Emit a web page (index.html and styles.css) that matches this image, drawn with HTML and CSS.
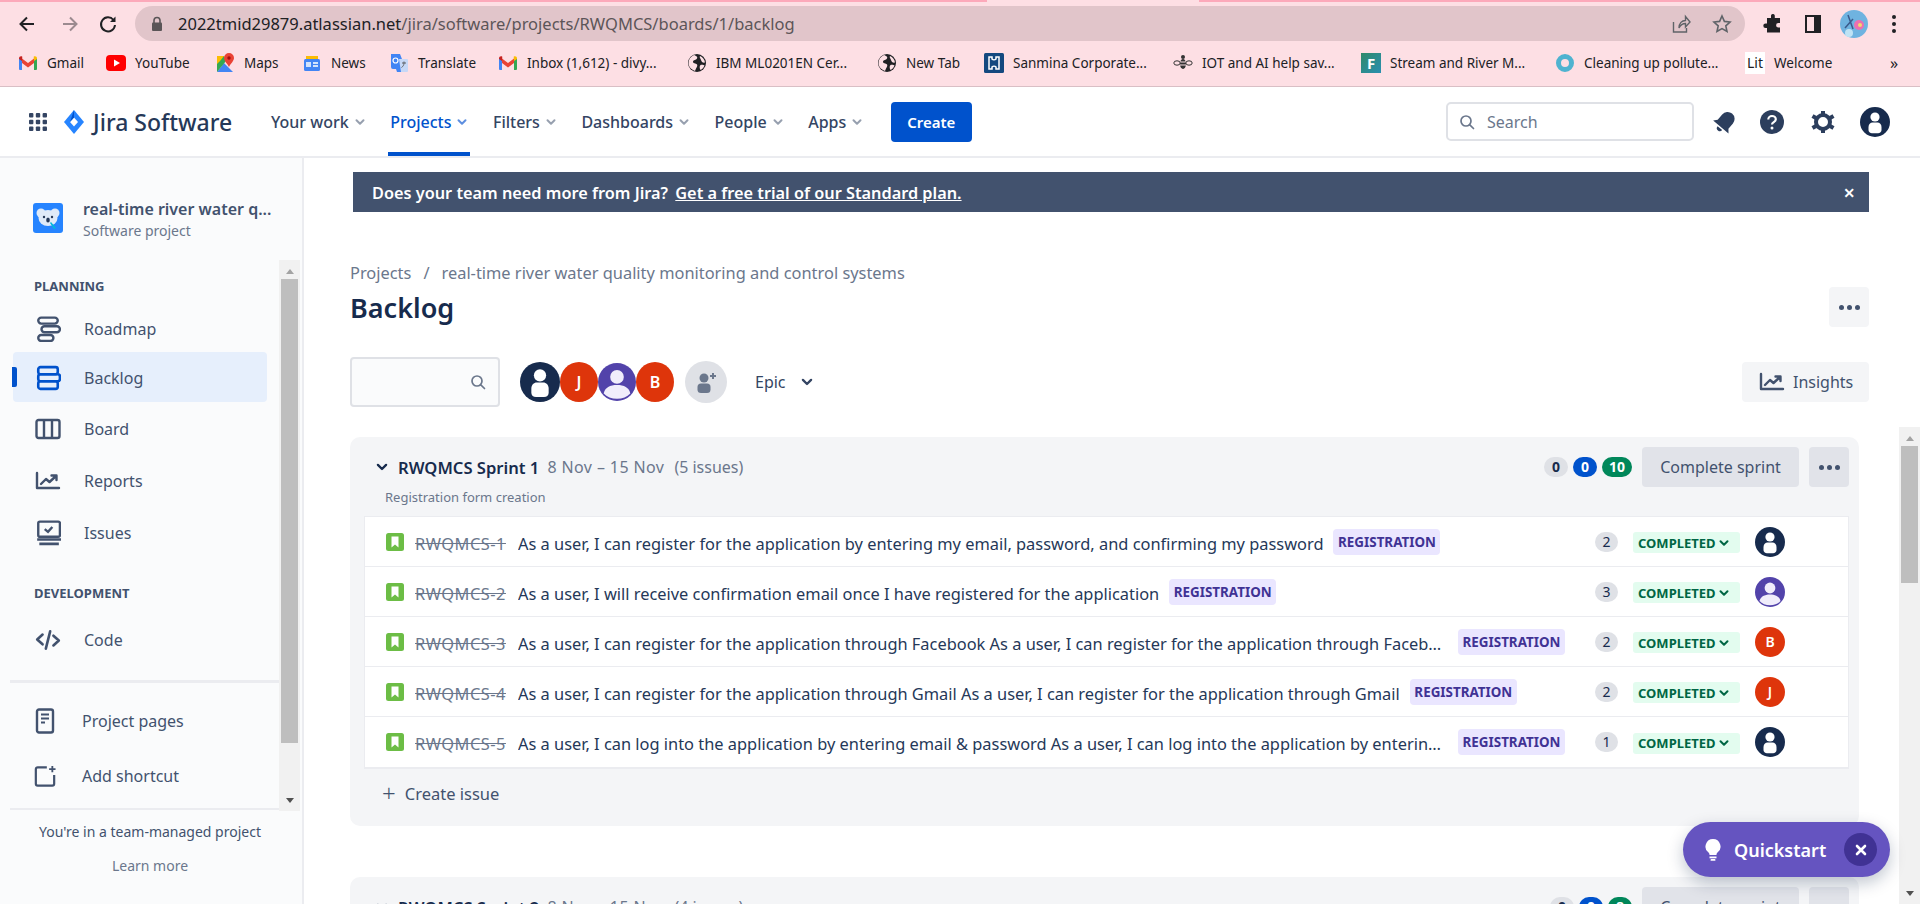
FILE: index.html
```html
<!DOCTYPE html>
<html lang="en">
<head>
    <meta charset="UTF-8">
    <title>Backlog - Jira Software</title>
    <link rel="stylesheet" href="styles.css">
</head>
<body>
    <svg class="defs" xmlns="http://www.w3.org/2000/svg">
        <symbol id="av-user" viewBox="0 0 30 30">
            <circle cx="15" cy="15" r="15" fill="#172b4d"/>
            <circle cx="15" cy="10" r="4.6" fill="#fff"/>
            <path d="M8.5 20c0-3 2-4.6 4-4.6h5c2 0 4 1.6 4 4.6v3c0 2-1.5 3.2-3.5 3.2h-6c-2 0-3.5-1.2-3.5-3.2z" fill="#fff"/>
        </symbol>
        <symbol id="av-purple" viewBox="0 0 30 30">
            <circle cx="15" cy="15" r="15" fill="#5243aa"/>
            <circle cx="15" cy="11" r="5.4" fill="#f0edfb"/>
            <path d="M4.5 24c1-4.6 5-6.6 10.5-6.6s9.500 2 10.500 6.6c-2.500 2.800-6.200 4.300-10.500 4.300s-8-1.500-10.500-4.300z" fill="#f0edfb"/>
        </symbol>
        <symbol id="ic-chev" viewBox="0 0 12 12">
            <path d="M2.5 4.2 6 7.7l3.500-3.500" fill="none" stroke="currentColor" stroke-width="2" stroke-linecap="round" stroke-linejoin="round"/>
        </symbol>
        <symbol id="ic-story" viewBox="0 0 18 18">
            <rect width="18" height="18" rx="2.5" fill="#6cbd45"/>
            <path d="M5.5 3.600h7v10.800L9 11.400l-3.500 3z" fill="#fff"/>
        </symbol>
        <symbol id="ic-globe" viewBox="0 0 20 20">
            <circle cx="10" cy="10" r="9" fill="#202124"/>
            <path d="M7 2c2 1 4 1.500 3 3.500S6.500 6.500 6 8.500s3 1.500 4 3-1 3.500-2 6.500C4 16.500 1.500 13.500 1.500 10 1.500 6.500 3.500 3.500 7 2zM13 3c2.500 1 4.500 3.500 5 6.500-2 .5-3.500-.5-4-2.500s-2-2.500-1-4zM13.500 12c1.500-.5 3.500 0 4 .5-.8 2-2.200 3.500-4 4.500-1-1.500-1.200-4 0-5z" fill="#fde0e5"/>
        </symbol>
        <symbol id="ic-gmail" viewBox="0 0 20 16">
            <path d="M1 15V3l3 2v10H2a1 1 0 0 1-1-1z" fill="#4285f4"/>
            <path d="M19 15V3l-3 2v10h2a1 1 0 0 0 1-1z" fill="#34a853"/>
            <path d="M4 8V3.500L10 8l6-4.500V8l-6 4.500z" fill="#ea4335"/>
            <path d="M1 3.500C1 1.500 3 .8 4.300 1.800L4 6 1 4z" fill="#c5221f"/>
            <path d="M19 3.500c0-2-2-2.700-3.300-1.700L16 6l3-2z" fill="#fbbc04"/>
        </symbol>
        <symbol id="ic-trend" viewBox="0 0 26 20">
            <path d="M2 2v15h22" fill="none" stroke="currentColor" stroke-width="2.400" stroke-linecap="round" stroke-linejoin="round"/>
            <path d="m6 13 5-5 3.500 3L21 5m-4.500-.5H21.500V9" fill="none" stroke="currentColor" stroke-width="2.400" stroke-linecap="round" stroke-linejoin="round"/>
        </symbol>
        <symbol id="ic-search" viewBox="0 0 16 16">
            <circle cx="7" cy="7" r="5" fill="none" stroke="currentColor" stroke-width="1.700"/>
            <path d="m10.800 10.800 3.700 3.700" stroke="currentColor" stroke-width="1.700" stroke-linecap="round"/>
        </symbol>
    </svg>

    <!-- browser chrome -->
    <header class="browser">
        <div class="tab-strip"><span class="tab-gap"></span></div>
        <div class="toolbar">
            <svg class="tool tool-back" viewBox="0 0 20 20"><path d="M17 10H4m6-6.500L3.500 10l6.500 6.500" fill="none" stroke="currentColor" stroke-width="2"/></svg>
            <svg class="tool tool-fwd" viewBox="0 0 20 20"><path d="M3 10h13M10 3.500l6.500 6.500-6.500 6.500" fill="none" stroke="currentColor" stroke-width="2"/></svg>
            <svg class="tool tool-reload" viewBox="0 0 20 20"><path d="M15.500 6A7 7 0 1 0 17 11" fill="none" stroke="currentColor" stroke-width="2"/><path d="M17.500 2.500V8H12z" fill="currentColor"/></svg>
            <div class="omnibox">
                <svg class="lock" viewBox="0 0 12 16"><path d="M3 7V4.500a3 3 0 0 1 6 0V7" fill="none" stroke="#5a5557" stroke-width="1.600"/><rect x="1" y="6.500" width="10" height="8.500" rx="1" fill="#5a5557"/></svg>
                <span class="url"><b>2022tmid29879.atlassian.net</b>/jira/software/projects/RWQMCS/boards/1/backlog</span>
                <svg class="omni-icon" viewBox="0 0 20 20"><path d="M2.500 8v10h13v-4M8 14c0-5 3-7.500 6.500-7.500V2.500L19 8l-4.500 5V9.500C11.500 9.500 9.500 11 8 14z" fill="none" stroke="#5f6368" stroke-width="1.400"/></svg>
                <svg class="omni-icon omni-star" viewBox="0 0 20 20"><path d="m10 2 2.400 5.400 5.600.6-4.200 3.800 1.200 5.700L10 14.600l-5 2.900 1.200-5.700L2 8l5.600-.6z" fill="none" stroke="#5f6368" stroke-width="1.600"/></svg>
            </div>
            <svg class="ext ext-puzzle" viewBox="0 0 20 20"><path d="M8 1.500a2 2 0 0 1 3.800 0V4H17v5h-1.700a2.200 2.200 0 0 0 0 4.400H17V18.500H4V14H2.600a2.300 2.300 0 0 1 0-4.600H4V4h4z" fill="#202124"/></svg>
            <svg class="ext ext-panel" viewBox="0 0 18 20"><path d="M1 1h16v18H1zM3 3v14h7V3z" fill="#202124" fill-rule="evenodd"/></svg>
            <svg class="profile" viewBox="0 0 28 28">
                <circle cx="14" cy="14" r="14" fill="#6fb3e0"/>
                <circle cx="19" cy="15" r="5" fill="#ec6fb0"/>
                <circle cx="20" cy="15" r="2" fill="#f5d76e"/>
                <path d="M8 5l5 14M5 18l8-9" stroke="#3a5a8c" stroke-width="1.500"/>
                <circle cx="9" cy="23" r="4" fill="#bfe3f5"/>
            </svg>
            <span class="kebab"><i></i><i></i><i></i></span>
        </div>
        <nav class="bookmarks">
            <a class="bm bm-gmail"><svg class="bm-icon"><use href="#ic-gmail"/></svg>Gmail</a>
            <a class="bm bm-yt"><svg class="bm-icon" viewBox="0 0 20 20"><rect y="2" width="20" height="16" rx="4" fill="#f00"/><path d="M8 6.500v7l6-3.500z" fill="#fff"/></svg>YouTube</a>
            <a class="bm bm-maps"><svg class="bm-icon" viewBox="0 0 20 20"><path d="M2 19 9 10l9 9z" fill="#4285f4"/><path d="M2 3h7l2 5-9 11z" fill="#34a853"/><path d="M2 3h7L5 8 2 11z" fill="#fbbc04"/><path d="M14 0a5 5 0 0 1 5 5c0 3-3 5-5 9-2-4-5-6-5-9a5 5 0 0 1 5-5z" fill="#ea4335"/><circle cx="14" cy="5" r="1.700" fill="#a50e0e"/></svg>Maps</a>
            <a class="bm bm-news"><svg class="bm-icon" viewBox="0 0 20 20"><path d="M4 3h12v5H4z" fill="#fbbc04"/><rect x="2" y="6" width="16" height="12" rx="1.500" fill="#4285f4"/><rect x="4" y="9" width="5" height="5" fill="#d2e3fc"/><rect x="11" y="9" width="5" height="2" fill="#d2e3fc"/><rect x="11" y="12" width="5" height="2" fill="#d2e3fc"/></svg>News</a>
            <a class="bm bm-trans"><svg class="bm-icon" viewBox="0 0 20 20"><path d="M2 1h9l7 18H8l-1-3H4a2 2 0 0 1-2-2z" fill="#4285f4"/><path d="M10 6h8a1 1 0 0 1 1 1v11a1 1 0 0 1-1 1h-6z" fill="#c6d8f7"/><path d="M13 10h4m-2-1.500v1.500c0 2-1 3.500-2.500 4.500" stroke="#5f6368" stroke-width="1" fill="none"/><circle cx="6.500" cy="7.500" r="2.500" fill="none" stroke="#fff" stroke-width="1.200"/></svg>Translate</a>
            <a class="bm bm-inbox"><svg class="bm-icon"><use href="#ic-gmail"/></svg>Inbox (1,612) - divy...</a>
            <a class="bm bm-ibm"><svg class="bm-icon"><use href="#ic-globe"/></svg>IBM ML0201EN Cer...</a>
            <a class="bm bm-new"><svg class="bm-icon"><use href="#ic-globe"/></svg>New Tab</a>
            <a class="bm bm-san"><svg class="bm-icon" viewBox="0 0 20 20"><rect width="20" height="20" rx="1.500" fill="#14497f"/><path d="M5 4h3v2c1 1 3 1 4 0V4h3v12h-3v-2c-1-1-3-1-4 0v2H5z" fill="none" stroke="#fff" stroke-width="1.500"/></svg>Sanmina Corporate...</a>
            <a class="bm bm-iot"><svg class="bm-icon" viewBox="0 0 20 20"><ellipse cx="10" cy="11" rx="3" ry="5" fill="#333"/><path d="M7 9h6M7 12h6" stroke="#fde0e5"/><circle cx="10" cy="4" r="2" fill="#333"/><ellipse cx="4" cy="10" rx="3.200" ry="2.200" fill="none" stroke="#333"/><ellipse cx="16" cy="10" rx="3.200" ry="2.200" fill="none" stroke="#333"/></svg>IOT and AI help sav...</a>
            <a class="bm bm-f"><span class="bm-f-icon">F</span>Stream and River M...</a>
            <a class="bm bm-clean"><svg class="bm-icon" viewBox="0 0 20 20"><circle cx="10" cy="10" r="6.500" fill="none" stroke="#4fb3d0" stroke-width="5"/></svg>Cleaning up pollute...</a>
            <a class="bm bm-lit"><span class="bm-lit-icon">Lit</span>Welcome</a>
            <span class="bm-more">»</span>
        </nav>
    </header>

    <!-- jira top nav -->
    <header class="topnav">
        <svg class="waffle" viewBox="0 0 20 20"><g fill="#344563"><rect x="1" y="1" width="4.400" height="4.400" rx="1"/><rect x="7.800" y="1" width="4.400" height="4.400" rx="1"/><rect x="14.600" y="1" width="4.400" height="4.400" rx="1"/><rect x="1" y="7.800" width="4.400" height="4.400" rx="1"/><rect x="7.800" y="7.800" width="4.400" height="4.400" rx="1"/><rect x="14.600" y="7.800" width="4.400" height="4.400" rx="1"/><rect x="1" y="14.600" width="4.400" height="4.400" rx="1"/><rect x="7.800" y="14.600" width="4.400" height="4.400" rx="1"/><rect x="14.600" y="14.600" width="4.400" height="4.400" rx="1"/></g></svg>
        <svg class="jira-mark" viewBox="0 0 20 24"><path d="M10 0 20 12 10 24 0 12z" fill="#2684ff"/><path d="M10 7.500 14 12l-4 4.500L6 12z" fill="#fff"/><path d="M10 0 6 12l4-4.500z" fill="#0052cc"/></svg>
        <span class="jira-name">Jira Software</span>
        <nav class="menu">
            <a class="menu-item">Your work<svg class="chev"><use href="#ic-chev"/></svg></a>
            <a class="menu-item is-current">Projects<svg class="chev"><use href="#ic-chev"/></svg></a>
            <a class="menu-item">Filters<svg class="chev"><use href="#ic-chev"/></svg></a>
            <a class="menu-item">Dashboards<svg class="chev"><use href="#ic-chev"/></svg></a>
            <a class="menu-item">People<svg class="chev"><use href="#ic-chev"/></svg></a>
            <a class="menu-item">Apps<svg class="chev"><use href="#ic-chev"/></svg></a>
        </nav>
        <button class="create">Create</button>
        <div class="global-search">
            <svg class="search-icon"><use href="#ic-search"/></svg>
            <span>Search</span>
        </div>
        <svg class="nav-icon nav-bell" viewBox="0 0 24 24"><g transform="rotate(40 12 12)" fill="#2c3e5d"><path d="M12 1a7 7 0 0 0-7 7v7l-3 3.500h20L19 15V8a7 7 0 0 0-7-7z"/><path d="M9 20h6a3 3 0 0 1-6 0z"/></g></svg>
        <svg class="nav-icon nav-help" viewBox="0 0 24 24"><circle cx="12" cy="12" r="12" fill="#2c3e5d"/><path d="M8.300 9.500C8.300 7.500 10 6 12 6s3.800 1.300 3.800 3.300c0 2.800-3.800 2.800-3.800 5.200" fill="none" stroke="#fff" stroke-width="2.200"/><circle cx="12" cy="18" r="1.500" fill="#fff"/></svg>
        <svg class="nav-icon nav-gear" viewBox="0 0 24 24"><circle cx="12" cy="12" r="7" fill="none" stroke="#2c3e5d" stroke-width="4"/><g stroke="#2c3e5d" stroke-width="4"><path d="M12 1v4M12 19v4M1.500 6l3.500 2M19 16l3.500 2M1.500 18 5 16M19 8l3.500-2"/></g></svg>
        <svg class="nav-avatar"><use href="#av-user"/></svg>
    </header>

    <div class="workspace">
        <aside class="sidebar">
            <div class="project">
                <svg class="project-icon" viewBox="0 0 30 30">
                    <rect width="30" height="30" rx="3" fill="#2684ff"/>
                    <circle cx="8" cy="10" r="4.500" fill="#dfeaf8"/>
                    <circle cx="22" cy="10" r="4.500" fill="#dfeaf8"/>
                    <ellipse cx="15" cy="15" rx="9.500" ry="8" fill="#dfeaf8"/>
                    <circle cx="11" cy="14" r="1.200" fill="#253858"/>
                    <circle cx="19" cy="14" r="1.200" fill="#253858"/>
                    <ellipse cx="15" cy="17" rx="1.800" ry="2.600" fill="#253858"/>
                    <path d="m18 19 5 6-2 1-4-6z" fill="#00b8d9"/>
                </svg>
                <div class="project-text">
                    <div class="project-name">real-time river water q...</div>
                    <div class="project-type">Software project</div>
                </div>
            </div>
            <div class="side-scroll">
                <div class="side-list">
                    <div class="side-label">PLANNING</div>
                    <a class="side-item side-roadmap">
                        <svg class="side-icon" viewBox="0 0 24 24"><g fill="none" stroke="#42526e" stroke-width="2.200"><rect x="3" y="1.500" width="18" height="5.500" rx="2.750"/><rect x="6" y="9.500" width="17" height="5.500" rx="2.750"/><rect x="3" y="17.500" width="14" height="5.500" rx="2.750"/></g></svg>
                        Roadmap
                    </a>
                    <a class="side-item is-active">
                        <svg class="side-icon" viewBox="0 0 24 24"><g fill="none" stroke="#0052cc" stroke-width="2.400"><rect x="3" y="2" width="18" height="6.500" rx="2"/><rect x="3" y="8.500" width="20" height="6.500" rx="2"/><rect x="3" y="15" width="18" height="7" rx="2"/></g></svg>
                        Backlog
                    </a>
                    <a class="side-item">
                        <svg class="side-icon" viewBox="0 0 26 24"><g fill="none" stroke="#42526e" stroke-width="2.400"><rect x="1.500" y="3" width="23" height="18" rx="2"/><path d="M9 3v18M17 3v18"/></g></svg>
                        Board
                    </a>
                    <a class="side-item">
                        <svg class="side-icon side-trend"><use href="#ic-trend"/></svg>
                        Reports
                    </a>
                    <a class="side-item">
                        <svg class="side-icon" viewBox="0 0 24 24"><g fill="none" stroke="#42526e" stroke-width="2.200"><rect x="3" y="1.500" width="20" height="14" rx="1.500"/><path d="m9 8.500 3 2.500 4-4.500"/></g><path d="M2 18h22M4 22h18" stroke="#42526e" stroke-width="2.400"/></svg>
                        Issues
                    </a>
                    <div class="side-label side-label-dev">DEVELOPMENT</div>
                    <a class="side-item side-code">
                        <svg class="side-icon" viewBox="0 0 24 24"><path d="M7 7 2 11.500 7 16M17 8l5 4.500-5 4.500M14 4 10 20" fill="none" stroke="#42526e" stroke-width="2.400" stroke-linecap="round" stroke-linejoin="round"/></svg>
                        Code
                    </a>
                    <div class="side-links">
                        <a class="side-link">
                            <svg class="link-icon" viewBox="0 0 20 26"><rect x="2" y="1.500" width="16" height="23" rx="2" fill="none" stroke="#42526e" stroke-width="2.400"/><path d="M6 6.500h8M6 10.500h8M6 14.500h4" stroke="#42526e" stroke-width="2"/></svg>
                            Project pages
                        </a>
                        <a class="side-link">
                            <svg class="link-icon" viewBox="0 0 24 24"><path d="M14 2.500H4a2 2 0 0 0-2 2v16a2 2 0 0 0 2 2h16a2 2 0 0 0 2-2V11" fill="none" stroke="#42526e" stroke-width="2.400"/><path d="M20 1v7M16.500 4.500h7" stroke="#42526e" stroke-width="2"/></svg>
                            Add shortcut
                        </a>
                    </div>
                </div>
                <div class="scrollbar scrollbar-side">
                    <span class="arrow-up"></span>
                    <span class="thumb"></span>
                    <span class="arrow-down"></span>
                </div>
            </div>
            <div class="side-foot">
                <p>You're in a team-managed project</p>
                <p class="learn">Learn more</p>
            </div>
        </aside>

        <main class="content">
            <div class="banner">
                <span class="banner-text">Does your team need more from Jira? <a>Get a free trial of our Standard plan.</a></span>
                <span class="banner-close">×</span>
            </div>
            <div class="crumbs">Projects<span class="crumb-sep">/</span>real-time river water quality monitoring and control systems</div>
            <div class="title-row">
                <h1>Backlog</h1>
                <button class="square-btn page-more"><i></i><i></i><i></i></button>
            </div>
            <div class="filters">
                <div class="filter-search"><svg class="search-icon"><use href="#ic-search"/></svg></div>
                <div class="avatars">
                    <svg class="face face-1"><use href="#av-user"/></svg>
                    <span class="face letter">J</span>
                    <svg class="face"><use href="#av-purple"/></svg>
                    <span class="face letter">B</span>
                </div>
                <span class="add-person">
                    <svg viewBox="0 0 24 24" class="add-person-icon"><circle cx="10" cy="8" r="4.500" fill="#6b778c"/><rect x="3.500" y="13.500" width="13" height="9.500" rx="3.500" fill="#6b778c"/><path d="M19 3v6M16 6h6" stroke="#6b778c" stroke-width="2"/></svg>
                </span>
                <span class="epic">Epic<svg class="epic-chev"><use href="#ic-chev"/></svg></span>
                <button class="insights"><svg class="insights-icon"><use href="#ic-trend"/></svg>Insights</button>
            </div>

            <section class="sprint">
                <div class="sprint-head">
                    <svg class="sprint-chev"><use href="#ic-chev"/></svg>
                    <span class="sprint-name">RWQMCS Sprint 1</span>
                    <span class="sprint-meta">8 Nov – 15 Nov</span>
                    <span class="sprint-meta sprint-count">(5 issues)</span>
                    <div class="sprint-actions">
                        <span class="count">0</span>
                        <span class="count count-blue">0</span>
                        <span class="count count-green">10</span>
                        <button class="complete">Complete sprint</button>
                        <button class="square-btn"><i></i><i></i><i></i></button>
                    </div>
                </div>
                <div class="sprint-goal">Registration form creation</div>
                <ul class="issues">
                    <li class="issue">
                        <svg class="story"><use href="#ic-story"/></svg>
                        <span class="key">RWQMCS-1</span>
                        <span class="summary">As a user, I can register for the application by entering my email, password, and confirming my password</span>
                        <span class="tag">REGISTRATION</span>
                        <span class="points">2</span>
                        <span class="status">COMPLETED<svg class="status-chev"><use href="#ic-chev"/></svg></span>
                        <svg class="assignee"><use href="#av-user"/></svg>
                    </li>
                    <li class="issue">
                        <svg class="story"><use href="#ic-story"/></svg>
                        <span class="key">RWQMCS-2</span>
                        <span class="summary">As a user, I will receive confirmation email once I have registered for the application</span>
                        <span class="tag">REGISTRATION</span>
                        <span class="points">3</span>
                        <span class="status">COMPLETED<svg class="status-chev"><use href="#ic-chev"/></svg></span>
                        <svg class="assignee"><use href="#av-purple"/></svg>
                    </li>
                    <li class="issue">
                        <svg class="story"><use href="#ic-story"/></svg>
                        <span class="key">RWQMCS-3</span>
                        <span class="summary">As a user, I can register for the application through Facebook As a user, I can register for the application through Facebook</span>
                        <span class="tag">REGISTRATION</span>
                        <span class="points">2</span>
                        <span class="status">COMPLETED<svg class="status-chev"><use href="#ic-chev"/></svg></span>
                        <span class="assignee letter">B</span>
                    </li>
                    <li class="issue">
                        <svg class="story"><use href="#ic-story"/></svg>
                        <span class="key">RWQMCS-4</span>
                        <span class="summary">As a user, I can register for the application through Gmail As a user, I can register for the application through Gmail</span>
                        <span class="tag">REGISTRATION</span>
                        <span class="points">2</span>
                        <span class="status">COMPLETED<svg class="status-chev"><use href="#ic-chev"/></svg></span>
                        <span class="assignee letter">J</span>
                    </li>
                    <li class="issue">
                        <svg class="story"><use href="#ic-story"/></svg>
                        <span class="key">RWQMCS-5</span>
                        <span class="summary">As a user, I can log into the application by entering email &amp; password As a user, I can log into the application by entering email &amp; password</span>
                        <span class="tag">REGISTRATION</span>
                        <span class="points">1</span>
                        <span class="status">COMPLETED<svg class="status-chev"><use href="#ic-chev"/></svg></span>
                        <svg class="assignee"><use href="#av-user"/></svg>
                    </li>
                </ul>
                <div class="create-issue"><span class="plus">+</span>Create issue</div>
            </section>

            <section class="sprint sprint-next">
                <div class="sprint-head">
                    <svg class="sprint-chev"><use href="#ic-chev"/></svg>
                    <span class="sprint-name">RWQMCS Sprint 2</span>
                    <span class="sprint-meta">8 Nov – 15 Nov</span>
                    <span class="sprint-meta sprint-count">(4 issues)</span>
                    <div class="sprint-actions">
                        <span class="count">0</span>
                        <span class="count count-blue">0</span>
                        <span class="count count-green">8</span>
                        <button class="complete">Complete sprint</button>
                        <button class="square-btn"><i></i><i></i><i></i></button>
                    </div>
                </div>
            </section>
        </main>

        <div class="scrollbar scrollbar-page">
            <span class="arrow-up"></span>
            <span class="thumb"></span>
            <span class="arrow-down"></span>
        </div>

        <div class="quickstart">
            <svg class="bulb" viewBox="0 0 16 22"><path d="M8 0a7.500 7.500 0 0 0-4.500 13.500c.8.700 1 1.500 1 2.500h7c0-1 .2-1.800 1-2.500A7.500 7.500 0 0 0 8 0z" fill="#fff"/><rect x="4.500" y="17.500" width="7" height="1.800" fill="#fff"/><rect x="5.500" y="20" width="5" height="1.800" rx=".9" fill="#fff"/></svg>
            <span>Quickstart</span>
            <span class="qs-close">
                <svg viewBox="0 0 12 12" class="qs-x"><path d="M2 2l8 8M10 2l-8 8" stroke="#fff" stroke-width="2.600" stroke-linecap="round"/></svg>
            </span>
        </div>
    </div>
</body>
</html>
```

FILE: styles.css
```css
/* Jira backlog inside a pink browser theme */
:root {
    --ui: "Noto Sans", "Open Sans", sans-serif;
    --ink: #172b4d;
    --ink-2: #42526e;
    --ink-3: #6b778c;
    --chrome: #fddfe4;
    --grey-btn: #f4f5f7;
    --grey-active: #e1e3e9;
}

html, body {
    margin: 0;
    height: 100%;
}

body {
    display: flex;
    flex-direction: column;
    height: 904px;
    overflow: hidden;
    background: #fff;
    color: var(--ink);
    font-family: var(--ui);
}

.defs {
    display: none;
}

button {
    font-family: inherit;
    border: 0;
    cursor: pointer;
}

/* browser chrome */
.browser {
    height: 87px;
    flex: none;
    background: var(--chrome);
    border-bottom: 1px solid #d9bfc5;
    box-sizing: border-box;
}

.tab-strip {
    height: 2px;
    background: #fca9ba;
    display: flex;
    padding-left: 987px;
}

.tab-gap {
    width: 212px;
    background: var(--chrome);
}

.toolbar {
    display: flex;
    align-items: center;
    height: 35px;
    margin-top: 4px;
}

.tool {
    width: 20px;
    height: 20px;
    flex: none;
    color: #202124;
}

.tool-back { margin-left: 17px; }
.tool-fwd { margin-left: 23px; color: #9b8a8f; }
.tool-reload { margin-left: 18px; }

.omnibox {
    width: 1610px;
    height: 35px;
    margin-left: 17px;
    flex: none;
    display: flex;
    align-items: center;
    border-radius: 18px;
    background: #e1c5ca;
}

.lock {
    width: 12px;
    height: 16px;
    margin-left: 16px;
}

.url {
    margin-left: 15px;
    font-size: 16.5px;
    color: #5c5558;
    white-space: nowrap;
}

.url b {
    font-weight: 400;
    color: #202124;
}

.omni-icon {
    width: 20px;
    height: 20px;
    margin-left: auto;
    margin-right: 0;
}

.omni-star {
    margin-left: 21px;
    margin-right: 13px;
}

.ext {
    height: 20px;
    flex: none;
}

.ext-puzzle { width: 20px; margin-left: 18px; }
.ext-panel { width: 18px; margin-left: 21px; }

.profile {
    width: 28px;
    height: 28px;
    margin-left: 18px;
    flex: none;
}

.kebab {
    display: flex;
    flex-direction: column;
    gap: 3px;
    margin-left: 24px;
}

.kebab i {
    width: 4px;
    height: 4px;
    border-radius: 50%;
    background: #202124;
}

.bookmarks {
    display: flex;
    align-items: center;
    height: 36px;
    margin-top: 4px;
    padding-left: 18px;
    font-size: 13.5px;
    color: #202124;
    white-space: nowrap;
}

.bm {
    display: flex;
    align-items: center;
    gap: 9px;
    flex: none;
}

.bm-icon {
    width: 20px;
    height: 20px;
    flex: none;
}

.bm-gmail { width: 88px; }
.bm-yt { width: 109px; }
.bm-maps { width: 87px; }
.bm-news { width: 87px; }
.bm-trans { width: 109px; }
.bm-inbox { width: 189px; }
.bm-ibm { width: 190px; }
.bm-new { width: 107px; }
.bm-san { width: 189px; }
.bm-iot { width: 188px; }
.bm-f { width: 194px; }
.bm-clean { width: 190px; }
.bm-lit { width: 145px; }

.bm-f-icon {
    width: 20px;
    height: 20px;
    flex: none;
    background: linear-gradient(135deg, #2f8a6a, #2a8fb0);
    color: #fff;
    font-weight: 700;
    font-size: 15px;
    line-height: 20px;
    text-align: center;
}

.bm-lit-icon {
    width: 20px;
    height: 22px;
    flex: none;
    background: #fff;
    font-size: 14px;
    line-height: 22px;
    text-align: center;
}

.bm-more {
    font-size: 16px;
}

/* top nav */
.topnav {
    height: 71px;
    flex: none;
    display: flex;
    align-items: center;
    box-sizing: border-box;
    border-bottom: 2px solid #ebecf0;
    padding-left: 28px;
}

.waffle {
    width: 20px;
    height: 20px;
    flex: none;
}

.jira-mark {
    width: 20px;
    height: 24px;
    margin-left: 16px;
    flex: none;
}

.jira-name {
    margin-left: 9px;
    font-size: 23px;
    font-weight: 500;
    color: #253858;
    width: 141px;
    white-space: nowrap;
}

.menu {
    display: flex;
    align-self: stretch;
    margin-left: 35px;
}

.menu-item {
    display: flex;
    align-items: center;
    gap: 5px;
    padding: 0 2px;
    margin-right: 20.5px;
    font-size: 16px;
    font-weight: 500;
    color: #344563;
    white-space: nowrap;
    border-bottom: 4px solid transparent;
    border-top: 4px solid transparent;
}

.menu-item.is-current {
    color: #0052cc;
    border-bottom-color: #0052cc;
}

.chev {
    width: 12px;
    height: 12px;
    color: #97a0af;
}

.is-current .chev {
    color: #5e8fe0;
}

.create {
    width: 81px;
    height: 40px;
    margin-left: 5px;
    border-radius: 4px;
    background: #0052cc;
    color: #fff;
    font-size: 15px;
    font-weight: 600;
}

.global-search {
    display: flex;
    align-items: center;
    gap: 12px;
    width: 248px;
    height: 39px;
    margin-left: auto;
    box-sizing: border-box;
    padding-left: 11px;
    border: 2px solid #dfe1e6;
    border-radius: 5px;
    font-size: 16px;
    color: #6b778c;
}

.search-icon {
    width: 16px;
    height: 16px;
    color: #6b778c;
    flex: none;
}

.nav-icon {
    width: 24px;
    height: 24px;
    flex: none;
}

.nav-bell { margin-left: 19px; }
.nav-help { margin-left: 23px; }
.nav-gear { margin-left: 27px; }

.nav-avatar {
    width: 30px;
    height: 30px;
    margin-left: 25px;
    margin-right: 30px;
    flex: none;
}

/* below the nav */
.workspace {
    position: relative;
    flex: 1;
    min-height: 0;
    display: flex;
}

.sidebar {
    width: 304px;
    flex: none;
    box-sizing: border-box;
    background: #fafbfc;
    border-right: 2px solid #ebecf0;
    display: flex;
    flex-direction: column;
}

.project {
    height: 102px;
    flex: none;
    display: flex;
    align-items: flex-start;
    padding: 45px 0 0 33px;
    box-sizing: border-box;
    gap: 20px;
}

.project-icon {
    width: 30px;
    height: 30px;
    flex: none;
}

.project-text {
    margin-top: -5px;
}

.project-name {
    font-size: 16px;
    font-weight: 600;
    line-height: 22px;
    color: #42526e;
    white-space: nowrap;
}

.project-type {
    font-size: 14px;
    line-height: 22px;
    color: var(--ink-3);
}

.side-scroll {
    height: 551px;
    flex: none;
    display: flex;
}

.side-list {
    width: 279px;
    flex: none;
    box-sizing: border-box;
    padding-top: 18px;
}

.side-label {
    padding-left: 34px;
    font-size: 13px;
    font-weight: 700;
    line-height: 16px;
    color: #42526e;
}

.side-label-dev {
    margin-top: 26px;
}

.side-item {
    position: relative;
    display: flex;
    align-items: center;
    height: 52px;
    margin: 0 12px 0 13px;
    padding-left: 23px;
    gap: 23px;
    font-size: 16px;
    color: #42526e;
    border-radius: 4px;
}

.side-roadmap,
.side-code {
    height: 46px;
    margin-top: 12px;
}

.side-code {
    margin-top: 16px;
}

.side-item.is-active {
    height: 50px;
    margin-bottom: 1px;
    background: #e6effc;
    padding-top: 2px;
    box-sizing: border-box;
}

.side-item.is-active::before {
    content: "";
    position: absolute;
    left: -1px;
    top: 15px;
    width: 5px;
    height: 20px;
    border-radius: 0 2px 2px 0;
    background: #0052cc;
}

.side-icon {
    width: 26px;
    height: 26px;
    flex: none;
    margin-left: -1px;
    color: #42526e;
}

.side-trend {
    height: 20px;
}

.side-links {
    margin: 17px 0 0 10px;
    padding-top: 10px;
    border-top: 3px solid #ebecf0;
    height: 130px;
    box-sizing: border-box;
    border-bottom: 2px solid #ebecf0;
}

.side-link {
    display: flex;
    align-items: center;
    height: 55px;
    padding-left: 24px;
    gap: 26px;
    font-size: 16px;
    color: #42526e;
}

.link-icon {
    width: 22px;
    height: 26px;
    flex: none;
}

.side-foot {
    text-align: center;
    padding-right: 2px;
    font-size: 14px;
    color: #42526e;
}

.side-foot p {
    margin: 11px 0 0;
    line-height: 20px;
}

.side-foot .learn {
    margin-top: 14px;
    color: var(--ink-3);
}

/* classic windows scrollbars */
.scrollbar {
    display: flex;
    flex-direction: column;
    align-items: center;
    flex: none;
    width: 21px;
    background: #f1f1f1;
}

.scrollbar .thumb {
    width: 17px;
    background: #bebebe;
    margin-top: 5px;
}

.arrow-up,
.arrow-down {
    width: 0;
    height: 0;
    border-left: 4.5px solid transparent;
    border-right: 4.5px solid transparent;
}

.arrow-up {
    margin-top: 9px;
    border-bottom: 5px solid #a3a3a3;
}

.arrow-down {
    margin-top: auto;
    margin-bottom: 8px;
    border-top: 5px solid #505050;
}

.scrollbar-side .thumb { height: 464px; }

.scrollbar-page {
    margin-top: 269px;
}

.scrollbar-page .thumb { height: 137px; }

/* main column */
.content {
    flex: 1;
    min-width: 0;
    padding: 14px 30px 0 46px;
}

.banner {
    display: flex;
    align-items: center;
    justify-content: space-between;
    height: 40px;
    box-sizing: border-box;
    margin: 0 0 0 3px;
    padding: 2px 14px 0 19px;
    background: #42526e;
    color: #fff;
    font-size: 16.3px;
    font-weight: 600;
}

.banner-text a {
    margin-left: 3px;
    text-decoration: underline;
}

.banner-close {
    font-size: 20px;
    line-height: 1;
}

.crumbs {
    margin-top: 50px;
    height: 22px;
    font-size: 16.4px;
    line-height: 22px;
    color: var(--ink-3);
}

.crumb-sep {
    margin: 0 12px;
}

.title-row {
    display: flex;
    align-items: center;
    justify-content: space-between;
    height: 38px;
    margin-top: 4px;
}

h1 {
    margin: 2px 0 0;
    font-size: 27px;
    font-weight: 600;
    line-height: 36px;
    color: var(--ink);
}

.square-btn {
    display: flex;
    align-items: center;
    justify-content: center;
    gap: 3px;
    width: 40px;
    height: 40px;
    padding: 0;
    border-radius: 4px;
    background: var(--grey-active);
    flex: none;
}

.square-btn i {
    width: 5px;
    height: 5px;
    border-radius: 50%;
    background: #42526e;
}

.page-more {
    background: var(--grey-btn);
}

.filters {
    display: flex;
    align-items: center;
    height: 50px;
    margin-top: 31px;
}

.filter-search {
    display: flex;
    align-items: center;
    justify-content: flex-end;
    width: 150px;
    height: 50px;
    box-sizing: border-box;
    padding-right: 12px;
    border: 2px solid #dfe1e6;
    border-radius: 4px;
    background: #fafbfc;
}

.avatars {
    display: flex;
    margin-left: 20px;
}

.face {
    width: 38px;
    height: 40px;
    flex: none;
}

.face-1 {
    width: 40px;
}

.letter {
    display: flex;
    align-items: center;
    justify-content: center;
    border-radius: 50%;
    background: #de350b;
    color: #fff;
    font-weight: 600;
}

.face.letter {
    font-size: 16px;
}

.add-person {
    display: flex;
    align-items: center;
    justify-content: center;
    width: 42px;
    height: 42px;
    margin-left: 11px;
    border-radius: 50%;
    background: #dfe1e6;
}

.add-person-icon {
    width: 24px;
    height: 24px;
}

.epic {
    display: flex;
    align-items: center;
    gap: 14px;
    margin-left: 28px;
    font-size: 16px;
    color: #344563;
}

.epic-chev {
    width: 14px;
    height: 14px;
    color: #344563;
}

.insights {
    display: flex;
    align-items: center;
    gap: 8px;
    width: 127px;
    height: 40px;
    margin-left: auto;
    padding: 0 0 0 17px;
    border-radius: 4px;
    background: var(--grey-btn);
    color: #42526e;
    font-size: 16px;
}

.insights-icon {
    width: 26px;
    height: 20px;
    color: #42526e;
}

/* sprint box */
.sprint {
    height: 389px;
    margin: 30px 10px 0 0;
    box-sizing: border-box;
    padding: 10px 10px 0 14px;
    border-radius: 10px;
    background: var(--grey-btn);
}

.sprint-next {
    margin-top: 51px;
}

.sprint-head {
    display: flex;
    align-items: center;
    height: 40px;
}

.sprint-chev {
    width: 14px;
    height: 14px;
    margin-left: 11px;
    color: #172b4d;
    flex: none;
}

.sprint-name {
    margin-left: 9px;
    font-size: 16.6px;
    font-weight: 600;
    color: var(--ink);
}

.sprint-meta {
    margin-left: 8px;
    font-size: 16px;
    letter-spacing: .4px;
    color: var(--ink-3);
}

.sprint-count {
    letter-spacing: 0;
    margin-left: 10px;
}

.sprint-actions {
    display: flex;
    align-items: center;
    margin-left: auto;
}

.count {
    min-width: 24px;
    height: 20px;
    box-sizing: border-box;
    padding: 0 7px;
    margin-left: 5px;
    border-radius: 10px;
    background: #dfe1e6;
    color: var(--ink);
    font-size: 14px;
    font-weight: 700;
    line-height: 20px;
    text-align: center;
}

.count-blue {
    background: #0052cc;
    color: #fff;
}

.count-green {
    background: #00875a;
    color: #fff;
}

.complete {
    width: 157px;
    height: 40px;
    margin: 0 10px;
    border-radius: 4px;
    background: var(--grey-active);
    color: #42526e;
    font-size: 16px;
}

.sprint-goal {
    margin: 2px 0 10px 21px;
    height: 17px;
    font-size: 13px;
    line-height: 17px;
    color: var(--ink-3);
}

.issues {
    margin: 0;
    padding: 0;
    list-style: none;
    background: #fff;
    border: 1px solid #ebecf0;
    border-width: 1px 1px 2px 1px;
}

.issue {
    display: flex;
    align-items: center;
    height: 49px;
    padding-left: 21px;
    border-bottom: 1px solid #ebecf0;
    font-size: 16.4px;
    white-space: nowrap;
}

.issue:last-child {
    border-bottom: 0;
    height: 50px;
}

.story {
    width: 18px;
    height: 18px;
    flex: none;
}

.key {
    margin: 3px 0 0 11px;
    width: 92px;
    flex: none;
    letter-spacing: .5px;
    color: var(--ink-3);
    text-decoration: line-through;
}

.summary {
    margin: 3px 0 0 11px;
    flex: 0 1 auto;
    overflow: hidden;
    text-overflow: ellipsis;
    color: #253858;
}

.tag {
    flex: none;
    width: 107px;
    height: 26px;
    margin: 0 auto 0 10px;
    box-sizing: border-box;
    border-radius: 4px;
    background: #eae6ff;
    color: #403294;
    font-size: 13.4px;
    font-weight: 700;
    line-height: 26px;
    text-align: center;
}

.points {
    width: 23px;
    height: 20px;
    flex: none;
    margin: 0 0 0 30px;
    border-radius: 10px;
    background: #dfe1e6;
    font-size: 14px;
    line-height: 20px;
    text-align: center;
}

.status {
    display: flex;
    align-items: center;
    width: 107px;
    height: 21px;
    flex: none;
    margin: 2px 0 0 15px;
    box-sizing: border-box;
    padding-left: 5px;
    gap: 2px;
    border-radius: 3px;
    background: #e3fcef;
    color: #006644;
    font-size: 13px;
    font-weight: 700;
}

.status-chev {
    width: 12px;
    height: 12px;
}

.assignee {
    width: 30px;
    height: 30px;
    flex: none;
    margin: 0 63px 0 15px;
}

.assignee.letter {
    font-size: 14px;
}

.create-issue {
    display: flex;
    align-items: center;
    gap: 9px;
    height: 40px;
    margin: 4px 0 0 18px;
    font-size: 16.5px;
    color: #42526e;
}

.plus {
    font-size: 24px;
    font-weight: 300;
    line-height: 1;
}

/* floating pill */
.quickstart {
    position: absolute;
    left: 1683px;
    top: 664px;
    width: 207px;
    height: 55px;
    display: flex;
    align-items: center;
    box-sizing: border-box;
    padding-left: 22px;
    gap: 13px;
    border-radius: 28px;
    background: #6554c0;
    color: #fff;
    font-size: 18px;
    font-weight: 600;
    box-shadow: 0 6px 16px rgba(9, 30, 66, .25);
}

.bulb {
    width: 16px;
    height: 22px;
    flex: none;
}

.qs-close {
    position: absolute;
    right: 13px;
    top: 11px;
    display: flex;
    align-items: center;
    justify-content: center;
    width: 33px;
    height: 33px;
    border-radius: 50%;
    background: #403294;
}

.qs-x {
    width: 12px;
    height: 12px;
}
```
